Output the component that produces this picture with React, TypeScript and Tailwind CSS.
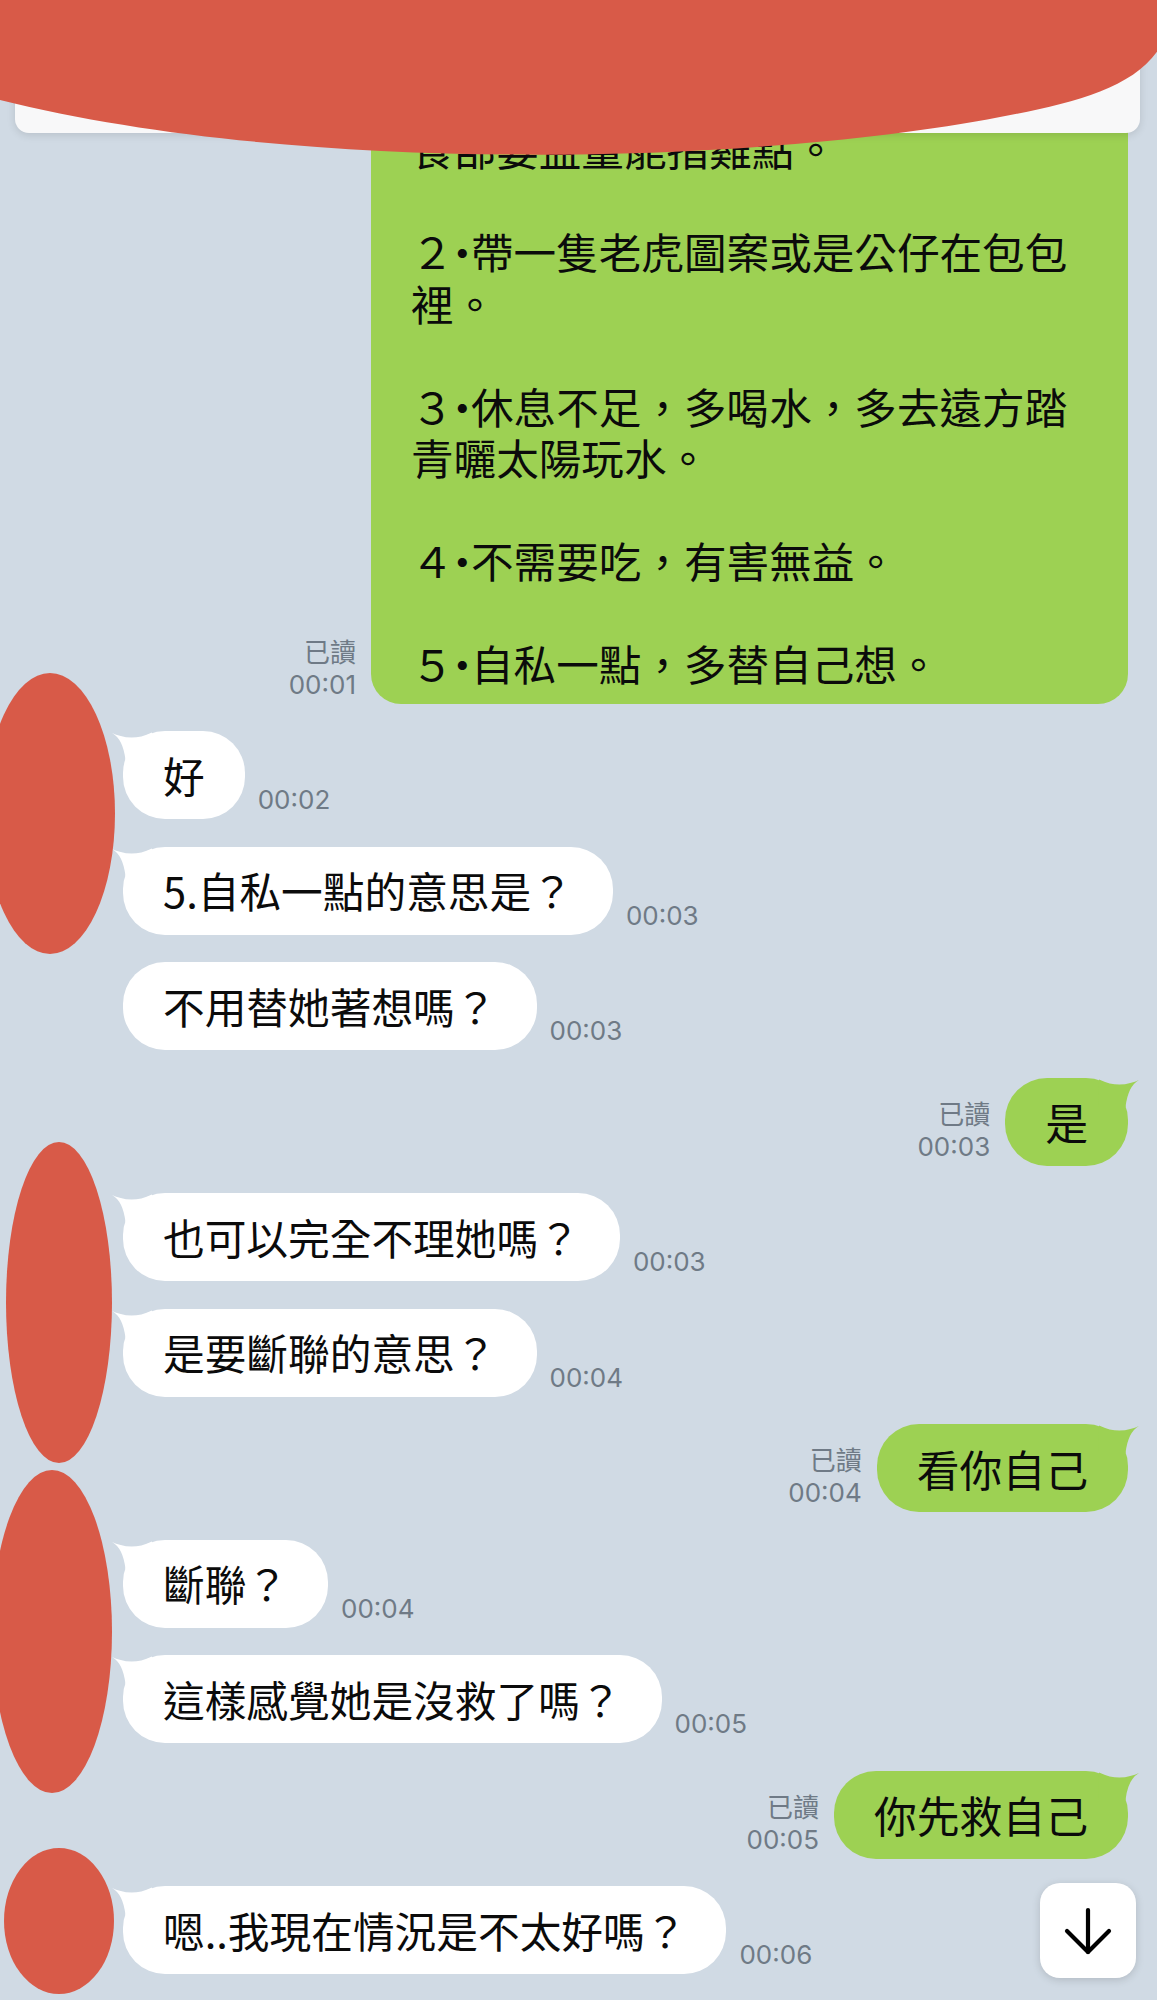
import { ArrowDown } from 'lucide-react';

type Msg = { side: 'l' | 'r'; text: string; time: string; tail: boolean };

const msgs: Msg[] = [
  { side: 'l', text: '好', time: '00:02', tail: true },
  { side: 'l', text: '5.自私一點的意思是？', time: '00:03', tail: true },
  { side: 'l', text: '不用替她著想嗎？', time: '00:03', tail: false },
  { side: 'r', text: '是', time: '00:03', tail: true },
  { side: 'l', text: '也可以完全不理她嗎？', time: '00:03', tail: true },
  { side: 'l', text: '是要斷聯的意思？', time: '00:04', tail: true },
  { side: 'r', text: '看你自己', time: '00:04', tail: true },
  { side: 'l', text: '斷聯？', time: '00:04', tail: true },
  { side: 'l', text: '這樣感覺她是沒救了嗎？', time: '00:05', tail: true },
  { side: 'r', text: '你先救自己', time: '00:05', tail: true },
  { side: 'l', text: '嗯..我現在情況是不太好嗎？', time: '00:06', tail: true },
];

const bigLines: { num?: string; text: string }[] = [
  { text: '食部要益量能指雞點。' },
  { text: '' },
  { num: '２‧', text: '帶一隻老虎圖案或是公仔在包包' },
  { text: '裡。' },
  { text: '' },
  { num: '３‧', text: '休息不足，多喝水，多去遠方踏' },
  { text: '青曬太陽玩水。' },
  { text: '' },
  { num: '４‧', text: '不需要吃，有害無益。' },
  { text: '' },
  { num: '５‧', text: '自私一點，多替自己想。' },
];

function Tail({ color, right }: { color: string; right?: boolean }) {
  return (
    <svg
      className={right ? 'absolute right-[-12px] top-0 w-[42px] h-[30px] -scale-x-100' : 'absolute left-[-12px] top-0 w-[42px] h-[30px]'}
      viewBox="0 0 42 30"
    >
      <path d="M1 2 C 10 6 24 10 41 1.5 L 42 29 L 14.5 29 Q 12 8 1 2 Z" fill={color} />
    </svg>
  );
}

function Stamp({ time, read }: { time: string; read?: boolean }) {
  return (
    <div className="flex flex-col items-end mb-[3px] text-[26px] leading-[32px] text-[#6f7a86] [font-family:Inter,'Noto_Sans_CJK_TC',sans-serif]">
      {read && <span>已讀</span>}
      <span>{time}</span>
    </div>
  );
}

function Row({ m }: { m: Msg }) {
  if (m.side === 'r') {
    return (
      <div className="flex justify-end items-end gap-[15px] pr-[29px]">
        <Stamp time={m.time} read />
        <div className="relative h-[88px] px-[40px] flex items-center rounded-[42px] bg-[#9dd153] text-[42.8px] leading-[51px] text-[#0b0b0b]">
          {m.tail && <Tail color="#9dd153" right />}
          <span className="relative">{m.text}</span>
        </div>
      </div>
    );
  }
  return (
    <div className="flex items-end gap-[13px] pl-[123px]">
      <div className="relative h-[88px] px-[40px] flex items-center rounded-[42px] bg-white text-[41.7px] leading-[51px] text-[#0b0b0b]">
        {m.tail && <Tail color="#ffffff" />}
        <span className="relative">{m.text}</span>
      </div>
      <Stamp time={m.time} />
    </div>
  );
}

export default function App() {
  return (
    <div className="relative w-[1157px] h-[2000px] overflow-hidden bg-[#d0dae4] [font-family:'Noto_Sans_CJK_TC','Noto_Sans_CJK_SC',sans-serif]">
      <div className="flex flex-col gap-[27.5px] pt-[52px]">
        <div className="flex justify-end items-end gap-[15px] pr-[29px]">
          <Stamp time="00:01" read />
          <div className="w-[757px] rounded-[30px] bg-[#9dd153] pl-[40px] pr-[10px] pt-[70px] pb-[15px] text-[42.6px] leading-[51.5px] text-[#0b0b0b]">
            {bigLines.map((l, i) => (
              <div key={i} className="flex h-[51.5px] whitespace-nowrap">
                {l.num && <span className="block h-[51.5px] tracking-[-12.6px]">{l.num}</span>}
                <span className="block h-[51.5px]">{l.text}</span>
              </div>
            ))}
          </div>
        </div>
        {msgs.map((m, i) => (
          <Row key={i} m={m} />
        ))}
      </div>

      {/* header card (covered) */}
      <div className="absolute left-[15px] top-[-20px] w-[1125px] h-[153px] rounded-[14px] bg-[#f8f8f9] shadow-[0_2px_8px_rgba(0,0,0,0.12)]" />

      {/* redaction marks */}
      <svg className="absolute left-0 top-0 w-[1157px] h-[200px]" viewBox="0 0 1157 200">
        <path
          d="M -10 -10 L -10 96 L 0 100 C 300 175 750 165 1000 117 C 1080 102 1150 85 1168 30 L 1168 -10 Z"
          fill="#d85a48"
        />
      </svg>
      <div className="absolute left-[-15px] top-[673px] w-[130px] h-[281px] rounded-[50%] bg-[#d85a48]" />
      <div className="absolute left-[6px] top-[1142px] w-[106px] h-[321px] rounded-[50%] bg-[#d85a48]" />
      <div className="absolute left-[-8px] top-[1470px] w-[120px] h-[323px] rounded-[50%] bg-[#d85a48]" />
      <div className="absolute left-[4px] top-[1848px] w-[110px] h-[146px] rounded-[50%] bg-[#d85a48]" />

      {/* scroll down button */}
      <div className="absolute left-[1040px] top-[1883px] w-[96px] h-[95px] rounded-[20px] bg-white shadow-[0_2px_8px_rgba(0,0,0,0.15)] flex items-center justify-center">
        <ArrowDown size={72} strokeWidth={1.4} color="#000000" />
      </div>
    </div>
  );
}
